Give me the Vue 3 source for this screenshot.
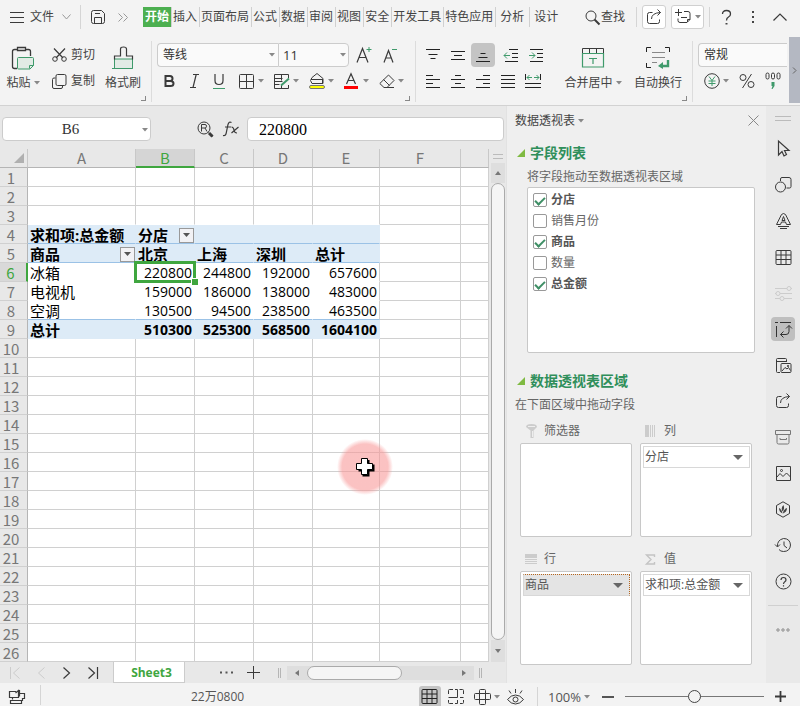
<script setup>
import { h, ref } from 'vue'

const G = '#3f9a6b'
const icons = {
  menu: [14, 12, '<path d="M0 1.5h14M0 6.5h14M0 11.5h14"/>'],
  chevDown: [9, 6, '<path d="M.5 .5l4 4.500 4-4.500" stroke="#999"/>'],
  save: [14, 14, '<path d="M2.500 .5h8l3 3v8q0 2-2 2h-9q-2 0-2-2v-9q0-2 2-2zM3.500 13.500v-6h7v6M4 3.500h5"/>'],
  more: [10, 9, '<path d="M.5 .5l4 4-4 4M5.500 .5l4 4-4 4" stroke="#999"/>'],
  search: [15, 15, '<circle cx="6" cy="6" r="5"/><path d="M9.500 9.500l5 5" stroke-width="2"/>'],
  share: [16, 16, '<path d="M6.500 3.500h-3q-2 0-2 2v7q0 2 2 2h8q2 0 2-2v-2M5.500 10q0-6 9-6.500M11.500 .5l3 3-3 3"/>'],
  dup: [16, 16, '<path d="M3.500 0v7M0 3.500h7M9 2.500h4q2 0 2 2v6l-3 3h-7q-2 0-2-2v-2M6 8.500h6M12.500 13v-2.500h2.500"/>'],
  help: [11, 15, '<path d="M1.500 4q0-3.500 4-3.500t4 3.500q0 2-2 3t-2 3.500" stroke-width="1.300"/><path d="M4.500 13h2v1.500h-2z" fill="#444" stroke="none"/>'],
  dots: [4, 14, '<path d="M1 1h2v2H1zM1 6h2v2H1zM1 11h2v2H1z" fill="#444" stroke="none"/>'],
  up: [14, 8, '<path d="M.5 7.500l6.500-6.500 6.500 6.500" stroke-width="1.200"/>'],
  caret: [6, 4, '<path d="M0 0h6L3 3.500z" fill="#888" stroke="none"/>'],
  bigCaret: [10, 5, '<path d="M0 0h10L5 5z" fill="#666" stroke="none"/>'],
  paste: [24, 24, `<path d="M6 3.500H3.500q-2 0-2 2v15q0 2 2 2H6M15 3.500h2.500q2 0 2 2V10M6.500 1.500h8v3h-8z" stroke-width="1.300"/><path d="M6.500 12.500q0-1 1-1h14q1 0 1 1v7l-3.500 3.500h-11.500q-1 0-1-1zM18.500 22.500v-3h4" fill="#e2ebe5" stroke="${G}"/>`],
  cut: [15, 14, '<path d="M2 .5l9 9.500M13 .5L4 10" stroke-width="1.200"/><circle cx="3" cy="11" r="2.300"/><circle cx="12" cy="11" r="2.300"/>'],
  copy: [15, 15, '<path d="M5.500 .5h7q1.500 0 1.500 1.500v8q0 1.500-1.500 1.500h-7q-1.500 0-1.500-1.500V2q0-1.500 1.500-1.500zM3.500 4H2Q.5 4 .5 5.500v7.500q0 1.500 1.500 1.500h7q1.500 0 1.500-1.500v-1"/>'],
  painter: [22, 24, `<path d="M2.500 13v9.500h18V13z" fill="#e2ebe5" stroke="${G}"/><path d="M2.500 13.500v-3.500h6V3q0-2 3-2t3 2v7h6v3.500" stroke-width="1.200"/><path d="M0 22.500h20.500" stroke="${G}"/>`],
  fontUp: [17, 18, `<path d="M1 16.500L6.500 2.500 12 16.500M3 11.500h7" stroke-width="1.200"/><path d="M10.500 3.500h5M13 1v5" stroke="${G}"/>`],
  fontDown: [15, 18, `<path d="M1 16.500L5.500 4.500 10 16.500M2.500 12h6" stroke-width="1.200"/><path d="M9 3.500h5" stroke="${G}"/>`],
  bold: [12, 14, '<path d="M2.500 2h4.500q2.500 0 2.500 2.500t-2.500 2.500h-4.500h5q3 0 3 2.500t-3 2.500h-5z" stroke-width="2"/>'],
  italic: [9, 14, '<path d="M3 .5h6M0 13.500h6M6.200 .5L3 13.500" stroke-width="1.200"/>'],
  underline: [12, 15, `<path d="M2 0v6.500q0 4 4 4t4-4V0" stroke-width="1.200"/><path d="M0 14.500h12" stroke="${G}"/>`],
  borders: [15, 15, '<path d="M1.500 .5h12q1 0 1 1v12q0 1-1 1h-12q-1 0-1-1v-12q0-1 1-1zM7.500 .5v14M.5 7.500h14"/>'],
  style: [16, 15, `<path d="M14.500 4V.5H.5v14h14V11M.5 7.500h8M.5 4.500h8M7.500 .5v6M7.500 10v4.500M.5 10.500h5"/><path d="M15 4.500L7 11.500" stroke="${G}" stroke-width="2"/>`],
  fill: [16, 16, '<path d="M3 4.500l5-4 6 5v5h-11l-1.500-3zM2 6.500h12M13.500 6v4"/><rect x=".5" y="12.500" width="15" height="3" rx="1.500" fill="#ff0" stroke="#777"/>'],
  color: [14, 16, '<path d="M2.500 11L7 .8 11.500 11M4 7.500h6" stroke-width="1.200"/><path d="M0 13h14v3H0z" fill="#f00" stroke="none"/>'],
  eraser: [16, 15, '<path d="M9.500 1l5.500 5.500-7 7H5L.8 9.500zM4.500 5.500l6 6M5 13.500h10"/>'],
  vTop: [14, 12, '<path d="M0 .5h14M2.500 5.500h9M4.500 9.500h5" stroke="#222"/>'],
  vMid: [14, 9, '<path d="M0 .5h14M3 4.500h8M0 8.500h14" stroke="#222"/>'],
  vBot: [14, 14, '<path d="M4.500 5.500h5M2.500 9.500h9M0 13.500h14" stroke="#222"/>'],
  outdent: [15, 13, `<path d="M5 .5h9M8 4.500h6M8 8.500h6M1 12.500h13" stroke="#222"/><path d="M0 6.500h6M3 3.500l-3 3 3 3" stroke="${G}"/>`],
  indent: [15, 13, `<path d="M1 .5h13M8 4.500h6M8 8.500h6M1 12.500h13" stroke="#222"/><path d="M0 6.500h6M3 3.500l3 3-3 3" stroke="${G}"/>`],
  hLeft: [14, 13, '<path d="M0 .5h7M0 4.500h14M0 8.500h7M0 12.500h14" stroke="#222"/>'],
  hMid: [14, 13, '<path d="M4 .5h6M0 4.500h14M4 8.500h6M0 12.500h14" stroke="#222"/>'],
  hRight: [14, 13, '<path d="M7 .5h7M0 4.500h14M7 8.500h7M0 12.500h14" stroke="#222"/>'],
  justify: [14, 13, '<path d="M0 .5h14M0 4.500h14M0 8.500h14M0 12.500h14" stroke="#222"/>'],
  spread: [16, 14, `<path d="M.5 0v6M15.500 0v6M0 9.500h16M0 13.500h16" stroke="#222"/><path d="M2 3.500h5M9 3.500h5M4.500 1L2 3.500 4.500 6M11.500 1l2.500 2.500L11.500 6" stroke="${G}"/>`],
  merge: [24, 22, `<path d="M1.500 6.500v-5h21v5M8.500 1.500v5M15.500 1.500v5" /><path d="M1.500 6.500h21v13.500h-21zM8 11.500h8M12 11.500V17" stroke="${G}" stroke-width="1.200"/>`],
  wrap: [24, 22, `<path d="M.5 5V.5H5M19 .5h4.500V5M.5 16v4.500H5" stroke="#222"/><path d="M6 5.500h13M6 10.500h13M6 15.500h5" stroke="#888"/><path d="M22 13v6h-7" stroke="${G}" stroke-width="2.400"/><path d="M12 19l5-4v7z" fill="${G}" stroke="none"/>`],
  yen: [16, 16, `<circle cx="8" cy="8" r="7.300"/><path d="M5 3.500L8 7.500l3-4M8 7.500v5.500M4.500 8h7M4.500 10.500h7" stroke="${G}"/>`],
  percent: [16, 16, '<circle cx="4" cy="4.500" r="3"/><circle cx="12" cy="11.500" r="3"/><path d="M12.500 1l-9 14"/>'],
  thousands: [16, 18, `<rect x="1" y="1" width="3" height="6" rx="1.500"/><rect x="6.500" y="1" width="3" height="6" rx="1.500"/><rect x="12" y="1" width="3" height="6" rx="1.500"/><path d="M6.500 10h3v4l-2 3h-1l1-3h-1z" fill="${G}" stroke="none"/>`],
  right: [5, 7, '<path d="M1 .5l3 3-3 3" stroke="#666"/>'],
  lens: [17, 17, '<circle cx="7" cy="7" r="6"/><path d="M4.500 10.500v-7h3.500q1.500 0 1.500 1.700T8 7H4.500M8 7l2 3.500M11.500 11.500l4 4"/><path d="M12 12l3.500 3.500" stroke-width="3"/>'],
  fx: [17, 16, '<path d="M8.500 1.500q-2.500-1.500-3.500 2L3 13q-.7 2-3 1.500M2 6h6" stroke-width="1.200"/><path d="M8.500 6q2 0 2.500 3t3 3M15.500 6L8.500 12" stroke-width="1.200"/>'],
  close: [11, 11, '<path d="M.5 .5l10 10M10.500 .5l-10 10" stroke="#888"/>'],
  corner: [10, 10, '<path d="M10 0v10H0z" fill="#b0b0b0" stroke="none"/>'],
  tri: [8, 8, '<path d="M8 0v8H0z" fill="#7fba42" stroke="none"/>'],
  funnel: [13, 14, '<path d="M1 3q0-3 5.500-3T12 3L8.500 6.500V14h-3V6.500z" fill="#ccc" stroke="none"/><path d="M3 2.500h7M7.500 7v6" stroke="#eee"/>'],
  cols: [11, 12, '<path d="M0 0h4v12H0zM5 0h1v12H5zM7 0h1v12H7zM9 0h1v12H9z" fill="#ccc" stroke="none"/>'],
  rowsIc: [12, 11, '<path d="M0 0h12v4H0zM0 5h12v1H0zM0 7h12v1H0zM0 9h12v1H0z" fill="#ccc" stroke="none"/>'],
  sigma: [11, 11, '<path d="M9.500 3V1H1.500L6 5.500 1.500 10h8V8" stroke="#c4c4c4" stroke-width="1.400"/>'],
  grip: [16, 5, '<path d="M0 .5h16M0 4.500h16" stroke="#bbb"/>'],
  arrow: [14, 18, '<path d="M2.500 1v14l3.500-3.500 2 4.500 2.500-1.500-2-4h4.500z" stroke-width="1.200"/>'],
  shapes: [17, 16, '<path d="M5.500 4V2q0-1.500 1.500-1.500h7q2 0 2 2v7q0 1.500-1.500 1.500h-3"/><circle cx="5.500" cy="10" r="5"/>'],
  art: [15, 16, '<path d="M.5 11.500L5.500 1.500q2-2 4 0l5 10h-4L9.500 9h-4l-1 2.500zM6 7.500l1.500-4 1.500 4zM2 13.500h11M4 15.500h7"/>'],
  table: [17, 15, '<path d="M2 .5h13q1 0 1 1v12q0 1-1 1H2q-1 0-1-1v-12q0-1 1-1zM1 5h15M1 9.500h15M6 .5V14.500M11 .5V14.500"/>'],
  sliders: [17, 16, '<path d="M0 3.500h12M5 8.500h12M0 8.500h1M0 13.500h5M9 13.500h8M16 3.500h1" stroke="#ccc"/><circle cx="14" cy="3.500" r="2" stroke="#ccc"/><circle cx="3" cy="8.500" r="2" stroke="#ccc"/><circle cx="7" cy="13.500" r="2" stroke="#ccc"/>'],
  pivot: [17, 17, '<path d="M5 1.500h11M1.500 5v11M0 1.500h3M14 4.500v6q0 3-3 3H5.500M11 7.500l3-3 3 3M8.500 10.500l-3 3 3 3" stroke="#333"/>'],
  gallery: [17, 17, '<path d="M5 15.500H2.500q-1 0-1-1v-12q0-1 1-1h8q1 0 1 1V5M1.500 4.500h10M7 6.500h8q1 0 1 1v7q0 1-1 1H7q-1 0-1-1v-7q0-1 1-1zM7 14l3-3.500 2 1.500 1.500-1.500 2 3"/><circle cx="13" cy="9" r=".7"/>'],
  archive: [17, 15, '<path d="M.5 .5h15v4H.5zM2 4.500v8q0 1.500 1.500 1.500h9q1.500 0 1.500-1.500v-8M5 8v1.500h6.500V8" stroke="#777"/>'],
  image: [17, 17, '<path d="M1.500 1.500h14v14h-14zM2 12l3-3.500 3 3 3.500-3.500 4 4"/><circle cx="6.500" cy="5.500" r="1"/>'],
  leaf: [16, 17, '<path d="M8 .8l6.500 3.700v8L8 16.200 1.500 12.500v-8z"/><path d="M8.500 4q-3 3-1 6.500Q10 8 8.500 4zM4 7q0 4 3.500 5.500Q7 8.500 4 7zM12 7q0 4-4 5.500 0-4 4-5.500z" fill="#444" stroke="none"/>'],
  history: [17, 16, '<path d="M2.500 9.500Q2 3 8.500 1.500q6.500 0 7 6.500-.5 6.500-7 6.500-3 0-4.500-2M9 4.500V8.500l3 2.500M0 7.500l2.500 2.500 2.500-2.500"/>'],
  circleHelp: [17, 17, '<circle cx="8.500" cy="8.500" r="7.500"/><path d="M6 7q0-2.500 2.500-2.500T11 7q0 1-1.200 1.700T8.500 11M8.500 12.200v1.300" stroke-width="1.200"/>'],
  ellipsis: [14, 4, '<circle cx="2" cy="2" r="1.200" stroke="#888"/><circle cx="7" cy="2" r="1.200" stroke="#888"/><circle cx="12" cy="2" r="1.200" stroke="#888"/>'],
  first: [10, 12, '<path d="M.5 0v12M9.500 .5L3.500 6l6 5.500" stroke="#ccc"/>'],
  prev: [7, 12, '<path d="M6.500 .5L.5 6l6 5.500" stroke="#ccc"/>'],
  next: [7, 12, '<path d="M.5 .5L6.500 6l-6 5.500" stroke-width="1.200"/>'],
  last: [10, 12, '<path d="M9.500 0v12M.5 .5L6.500 6l-6 5.500" stroke-width="1.200"/>'],
  sheetMore: [14, 3, '<path d="M0 .5h2v2H0zM5.500 .5h2v2h-2zM11 .5h2v2h-2z" fill="#555" stroke="none"/>'],
  plus: [13, 13, '<path d="M6.500 0v13M0 6.500h13"/>'],
  vgrip: [3, 10, '<path d="M.5 0v10M2.500 0v10" stroke="#b5b5b5"/>'],
  sUp: [6, 4, '<path d="M0 4h6L3 0z" fill="#777" stroke="none"/>'],
  sDown: [6, 4, '<path d="M0 0h6L3 4z" fill="#777" stroke="none"/>'],
  sLeft: [4, 6, '<path d="M4 0v6L0 3z" fill="#777" stroke="none"/>'],
  sRight: [4, 6, '<path d="M0 0v6l4-3z" fill="#777" stroke="none"/>'],
  dock: [17, 16, '<path d="M7 2.500H.5v6H9.500V1.500l-3 2.500M9.500 1.500h1v6M3.500 8.500v2M1.500 14.500v-3H12.500v3zM11 4.500h4.500v5h-2V12" stroke-width="1.200"/>'],
  grid: [17, 15, '<path d="M2 .5h13q1 0 1 1v12q0 1-1 1H2q-1 0-1-1v-12q0-1 1-1zM1 5h15M1 9.500h15M6 .5V14.500M11 .5V14.500" stroke="#222"/>'],
  page: [17, 15, '<path d="M.5 5V1.500q0-1 1-1H5M7 .5h2.500V8.500H.5M11.500 .5h3q1 0 1 1V5M15.500 8.500H12M.5 11v2.500q0 1 1 1H5M7 14.500h2.500V11M12 14.500h2.500q1 0 1-1V11"/>'],
  read: [17, 16, '<path d="M6.500 .5h4q1 0 1 1v13q0 1-1 1h-4q-1 0-1-1v-13q0-1 1-1zM5.500 4.500h-4q-1 0-1 1v4q0 1 1 1h4M11.500 4.500h4q1 0 1 1v4q0 1-1 1h-4M5.500 4.500h6M5.500 10.500h6"/>'],
  eye: [17, 16, '<path d="M.5 10.500q3.500-4.500 8-4.500t8 4.500q-3.500 4.500-8 4.500t-8-4.500zM8.500 0v4M2 1.500l2 3M15 1.500l-2 3"/><circle cx="8.500" cy="10.500" r="2.500"/>'],
  minus: [12, 2, '<path d="M0 1h12" stroke-width="2" stroke="#555"/>'],
  zoomPlus: [11, 11, '<path d="M0 5.500h11M5.500 0v11" stroke-width="1.800"/>'],
  filterArrow: [7, 5, '<path d="M0 0h7L3.500 4z" fill="#555" stroke="none"/>'],
  cell: [20, 20, '<path d="M7.500 3h7v4.500h5v7h-5v5h-7v-5h-4v-7h4z" fill="#000" stroke="none"/><path d="M6.500 1.500h6v5h5v6h-5v5h-6v-5h-5v-6h5z" fill="#fff" stroke="#000"/>'],
}
const Icon = ({ name }) => {
  const [w, ht, body] = icons[name]
  return h('svg', {
    width: w, height: ht, viewBox: `0 0 ${w} ${ht}`, fill: 'none', stroke: '#3a3a3a',
    'stroke-width': 1, 'aria-hidden': 'true', innerHTML: body,
  })
}
Icon.props = ['name']

const tabs = ['开始', '插入', '页面布局', '公式', '数据', '审阅', '视图', '安全', '开发工具', '特色应用', '分析', '设计']
const activeTab = ref('开始')
const columns = ['A', 'B', 'C', 'D', 'E', 'F', '']
const pivot = {
  4: ['求和项:总金额', '分店', '', '', ''],
  5: ['商品', '北京', '上海', '深圳', '总计'],
  6: ['冰箱', 220800, 244800, 192000, 657600],
  7: ['电视机', 159000, 186000, 138000, 483000],
  8: ['空调', 130500, 94500, 238500, 463500],
  9: ['总计', 510300, 525300, 568500, 1604100],
}
const value = (r, c) => pivot[r]?.[c] ?? ''
const cellClass = (r, c) => {
  const inside = c < 5
  return {
    num: typeof value(r, c) === 'number',
    above: inside && r === 3,
    pivot: inside && r >= 4 && r <= 9,
    shade: inside && (r === 4 || r === 5 || r === 9),
    rule: inside && (r === 4 || r === 5 || r === 8),
    edge: c === 4 && r >= 6 && r <= 8,
    active: r === 6 && c === 1,
  }
}
const fields = ref([
  { name: '分店', on: true },
  { name: '销售月份', on: false },
  { name: '商品', on: true },
  { name: '数量', on: false },
  { name: '总金额', on: true },
])
const areas = [
  { label: '筛选器', icon: 'funnel', item: '' },
  { label: '列', icon: 'cols', item: '分店' },
  { label: '行', icon: 'rowsIc', item: '商品', focus: true },
  { label: '值', icon: 'sigma', item: '求和项:总金额' },
]
const tools = ['arrow', 'shapes', 'art', 'table', 'sliders', 'pivot', 'gallery', 'share', 'archive', 'image', 'leaf', 'history', 'circleHelp']
const zoom = ref(50)
</script>

<template>
  <div class="app">
    <header class="topbar">
      <button class="file"><Icon name="menu" /><span>文件</span><Icon name="chevDown" class="file-chev" /></button>
      <i class="vsep tall"></i>
      <button class="save"><Icon name="save" /></button>
      <button class="more"><Icon name="more" /></button>
      <nav class="tabs">
        <button v-for="t in tabs" :key="t" :class="{ on: t === activeTab, wide: t === '分析' || t === '设计' }" @click="activeTab = t">{{ t }}</button>
      </nav>
      <div class="top-right">
        <button class="find"><Icon name="search" /><span>查找</span></button>
        <i class="vsep"></i>
        <button class="boxed"><Icon name="share" /></button>
        <button class="boxed dup"><Icon name="dup" /><Icon name="caret" /></button>
        <i class="vsep"></i>
        <button class="sq"><Icon name="help" /></button>
        <button class="sq"><Icon name="dots" /></button>
        <button class="sq"><Icon name="up" /></button>
      </div>
    </header>

    <section class="ribbon">
      <div class="group clipboard">
        <button class="big paste"><Icon name="paste" /><span>粘贴 <Icon name="caret" /></span></button>
        <div class="stack small">
          <button class="inline"><Icon name="cut" /><span>剪切</span></button>
          <button class="inline"><Icon name="copy" /><span>复制</span></button>
        </div>
        <button class="big"><Icon name="painter" /><span>格式刷</span></button>
        <i class="corner"></i>
      </div>

      <div class="group font">
        <div class="stack">
          <div class="line">
            <label class="combo family"><select aria-label="字体"><option>等线</option></select><Icon name="caret" /></label>
            <label class="combo size"><select aria-label="字号"><option>11</option></select><Icon name="caret" /></label>
            <button class="grow"><Icon name="fontUp" /></button>
            <button class="grow"><Icon name="fontDown" /></button>
          </div>
          <div class="line">
            <button class="tool"><Icon name="bold" /></button>
            <button class="tool"><Icon name="italic" /></button>
            <button class="tool"><Icon name="underline" /></button>
            <div class="splits">
              <button v-for="n in ['borders', 'style', 'fill', 'color', 'eraser']" :key="n" class="split"><Icon :name="n" /><Icon name="caret" /></button>
            </div>
          </div>
        </div>
        <i class="corner"></i>
      </div>

      <div class="group align">
        <div class="stack">
          <div class="line">
            <button class="tool"><Icon name="vTop" /></button>
            <button class="tool"><Icon name="vMid" /></button>
            <button class="tool pressed"><Icon name="vBot" /></button>
            <button class="tool spaced"><Icon name="outdent" /></button>
            <button class="tool"><Icon name="indent" /></button>
          </div>
          <div class="line">
            <button v-for="n in ['hLeft', 'hMid', 'hRight', 'justify', 'spread']" :key="n" class="tool"><Icon :name="n" /></button>
          </div>
        </div>
        <button class="big merge"><Icon name="merge" /><span>合并居中 <Icon name="caret" /></span></button>
        <button class="big wrap"><Icon name="wrap" /><span>自动换行</span></button>
        <i class="corner"></i>
      </div>

      <div class="group number">
        <div class="stack">
          <div class="line">
            <label class="combo format"><select aria-label="数字格式"><option>常规</option></select></label>
          </div>
          <div class="line numbers">
            <button class="split"><Icon name="yen" /><Icon name="caret" /></button>
            <button><Icon name="percent" /></button>
            <button><Icon name="thousands" /></button>
          </div>
        </div>
      </div>
      <button class="ribbon-next"><Icon name="right" /></button>
    </section>

    <main class="work">
      <section class="book">
        <div class="formula">
          <label class="name-box"><input value="B6" aria-label="名称框" /><Icon name="caret" /></label>
          <button class="lens"><Icon name="lens" /></button>
          <button class="fx"><Icon name="fx" /></button>
          <input class="entry" value="220800" aria-label="编辑栏" />
        </div>

        <div class="sheet">
          <div class="grid-area">
            <table>
              <colgroup>
                <col class="w-head" /><col class="w-a" /><col class="w-b" /><col class="w-b" /><col class="w-b" /><col class="w-e" /><col class="w-f" /><col />
              </colgroup>
              <thead>
                <tr>
                  <th class="origin"><Icon name="corner" /></th>
                  <th v-for="(c, i) in columns" :key="i" :class="{ sel: c === 'B' }">{{ c }}</th>
                </tr>
              </thead>
              <tbody>
                <tr v-for="r in 26" :key="r">
                  <th :class="{ sel: r === 6 }">{{ r }}</th>
                  <td v-for="(c, i) in columns" :key="i" :class="cellClass(r, i)">{{ value(r, i) }}<button v-if="(r === 4 && i === 1) || (r === 5 && i === 0)" class="filter" aria-label="筛选"><Icon name="filterArrow" /></button><span v-if="r === 6 && i === 1" class="cursor-box"></span></td>
                </tr>
              </tbody>
            </table>
            <div class="pointer"><Icon name="cell" /></div>
          </div>
          <div class="vscroll">
            <span class="vhandle"><Icon name="grip" /></span>
            <button><Icon name="sUp" /></button>
            <div class="vtrack"></div>
            <button class="down"><Icon name="sDown" /></button>
          </div>
        </div>

        <div class="sheetbar">
          <div class="nav">
            <button><Icon name="first" /></button>
            <button><Icon name="prev" /></button>
            <button><Icon name="next" /></button>
            <button><Icon name="last" /></button>
          </div>
          <button class="sheet-tab">Sheet3</button>
          <button class="sheet-more"><Icon name="sheetMore" /></button>
          <button class="sheet-add"><Icon name="plus" /></button>
          <Icon name="vgrip" />
          <div class="hscroll">
            <button><Icon name="sLeft" /></button>
            <div class="hthumb"></div>
            <button class="hend"><Icon name="sRight" /></button>
          </div>
          <Icon name="vgrip" />
        </div>
      </section>

      <aside class="panel">
        <div class="panel-title"><button>数据透视表 <Icon name="caret" /></button><button class="close" aria-label="关闭"><Icon name="close" /></button></div>
        <h2><Icon name="tri" />字段列表</h2>
        <p class="hint inset">将字段拖动至数据透视表区域</p>
        <ul class="fields">
          <li v-for="f in fields" :key="f.name">
            <label :class="{ on: f.on }"><input v-model="f.on" type="checkbox" />{{ f.name }}</label>
          </li>
        </ul>
        <h2 class="second"><Icon name="tri" />数据透视表区域</h2>
        <p class="hint">在下面区域中拖动字段</p>
        <div class="areas">
          <div v-for="a in areas" :key="a.label">
            <h3><span><Icon :name="a.icon" /></span>{{ a.label }}</h3>
            <div class="drop">
              <button v-if="a.item" :class="['chip', { focus: a.focus }]">{{ a.item }}<Icon name="bigCaret" /></button>
            </div>
          </div>
        </div>
      </aside>

      <aside class="side">
        <span class="side-grip"><Icon name="grip" /></span>
        <button v-for="t in tools" :key="t" :class="{ on: t === 'pivot' }"><Icon :name="t" /></button>
        <hr />
        <button><Icon name="ellipsis" /></button>
      </aside>
    </main>

    <footer class="status">
      <button class="dock"><Icon name="dock" /></button>
      <i class="vsep"></i>
      <span class="reading">22万0800</span>
      <div class="views">
        <button class="view on"><Icon name="grid" /></button>
        <button class="view"><Icon name="page" /></button>
        <button class="view read"><Icon name="read" /><Icon name="caret" /></button>
        <button class="view eye"><Icon name="eye" /></button>
        <i class="vsep"></i>
        <button class="pct">100% <Icon name="caret" /></button>
        <button class="step"><Icon name="minus" /></button>
        <input v-model="zoom" type="range" min="0" max="100" aria-label="缩放" />
        <button class="step"><Icon name="zoomPlus" /></button>
      </div>
    </footer>
  </div>
</template>

<style>
body { margin: 0; }
</style>

<style scoped>
.app {
  min-height: 100vh;
  display: flex;
  flex-direction: column;
  background: #f3f3f3;
  color: #444;
  font: 12px/16px "Open Sans", "Noto Sans CJK SC", sans-serif;
  overflow: hidden;
}
.app * { box-sizing: border-box; }
button {
  border: 0;
  padding: 0;
  margin: 0;
  background: none;
  color: inherit;
  font: inherit;
  white-space: nowrap;
  display: flex;
  align-items: center;
  justify-content: center;
  flex: none;
}
svg { display: block; flex: none; overflow: visible; }
.vsep { width: 1px; height: 20px; background: #d5d5d5; flex: none; }
.vsep.tall { height: 24px; }

.topbar { height: 34px; display: flex; align-items: center; padding: 0 9px 0 10px; }
.file { gap: 6px; margin-right: 9px; }
.file-chev { margin-left: 2px; }
.save { margin-left: 10px; }
.more { margin: 0 15px 0 13px; }
.tabs { display: flex; }
.tabs button { height: 20px; padding: 0 2px 0 1px; border-left: 1px solid #d0d0d0; }
.tabs button.wide { padding: 0 5px 0 4px; }
.tabs button.on { background: #4caf50; color: #fff; font-weight: bold; border-color: #4caf50; }
.top-right { margin-left: auto; display: flex; align-items: center; gap: 5px; }
.find { gap: 1px; margin-right: 6px; }
.boxed { width: 24px; height: 24px; border: 1px solid #d0d0d0; border-radius: 3px; background: #fff; }
.boxed.dup { width: 33px; gap: 4px; }
.sq { width: 22px; height: 24px; }

.ribbon { height: 72px; display: flex; border-bottom: 1px solid #d2d2d2; }
.group { position: relative; display: flex; margin: 7px 0 3px; padding: 0 10px 0 5px; border-right: 1px solid #dcdcdc; }
.clipboard { padding-left: 3px; padding-right: 10px; }
.group.font { padding-right: 8px; }
.group.number { flex: 1; border: 0; padding-right: 0; margin-right: 2px; min-width: 0; overflow: hidden; }
.corner { position: absolute; right: 5px; bottom: 1px; width: 5px; height: 5px; border: solid #888; border-width: 0 1px 1px 0; }
.big { flex-direction: column; justify-content: flex-start; padding-top: 5px; gap: 5px; width: 36px; }
.big span { display: flex; align-items: center; gap: 3px; }
.big.paste { width: 40px; }
.big.merge { width: 60px; margin-left: 15px; }
.big.wrap { width: 48px; margin-left: 11px; }
.big.merge > svg, .big.wrap > svg { margin: 1px 0; }
.stack { display: flex; flex-direction: column; padding-top: 1px; min-width: 0; }
.stack.small { margin: 0 10px 0 9px; }
.inline { height: 26px; gap: 4px; }
.line { display: flex; align-items: center; height: 26px; gap: 1px; }
.align .stack { width: 127px; }
.tool { width: 24px; height: 24px; border-radius: 4px; }
.tool.pressed { background: #c4c4c4; }
.tool.spaced { margin-left: 3px; }
.combo { position: relative; display: block; height: 24px; }
.combo svg { position: absolute; right: 3px; top: 10px; }
.combo select {
  appearance: none; display: block; width: 100%; height: 24px; padding: 0 5px;
  border: 1px solid #ccc; background: #fafafa; color: #333; font: inherit; outline: 0;
}
.family { width: 121px; }
.family select { border-radius: 4px 0 0 4px; border-right: 0; }
.size { width: 71px; margin-right: 6px; margin-left: -1px; }
.size select { border-radius: 0 4px 4px 0; font-size: 13px; padding: 0 4px; }
.grow { margin-right: 9px; }
.splits { display: flex; gap: 10px; margin-left: 7px; }
.split { width: 25px; justify-content: space-between; }
.format { width: 100%; }
.format select { border-right: 0; border-radius: 4px 0 0 4px; }
.number .stack { flex: 1; }
.numbers { padding-left: 6px; gap: 10px; }
.ribbon-next { width: 11px; margin: 3px 0 2px; background: #b4b8c2; }

.work { flex: 1; display: flex; }
.book { flex: 1; min-width: 0; display: flex; flex-direction: column; background: #e8e8e8; }
.formula { display: flex; align-items: center; height: 43px; padding: 3px 2px 0; }
.formula input { border: 1px solid #ccc; border-radius: 4px; background: #fff; height: 24px; outline: 0; color: #333; font: 16px/20px "Liberation Serif", serif; }
.name-box { position: relative; width: 149px; flex: none; }
.name-box input { display: block; width: 100%; text-align: center; padding: 1px 16px 0 4px; font-size: 15px; }
.name-box svg { position: absolute; right: 3px; top: 11px; }
.lens { margin-left: 46px; }
.fx { margin: 0 7px 0 9px; }
.formula .entry { flex: 1; min-width: 0; padding: 1px 11px 0; color: #000; }

.sheet { display: flex; flex: 1; }
.grid-area { position: relative; flex: 1; min-width: 0; background: #fff; }
table { width: 100%; table-layout: fixed; border-collapse: separate; border-spacing: 0; font-size: 15px; line-height: 18px; color: #000; }
.w-head { width: 28px; }
.w-a { width: 108px; }
.w-b { width: 59px; }
.w-e { width: 67px; }
.w-f { width: 81px; }
th, td { height: 19px; padding: 0 2px; border: solid #d0d0d0; border-width: 0 1px 1px 0; white-space: nowrap; }
th { background: #e8e8e8; color: #777; font-weight: normal; font-family: "Noto Sans CJK SC", sans-serif; text-align: center; }
thead th { border-color: #c8c8c8; border-bottom-color: #b5b5b5; }
tbody th { padding: 2px 5px 0 0; border-right-color: #b5b5b5; line-height: 16px; }
thead .sel { background: #d5d5d5; color: #3fa63f; border-bottom: 2px solid #3fa63f; line-height: 17px; }
tbody .sel { background: #d9d9d9; color: #3fa63f; border-right: 2px solid #3fa63f; }
.origin svg { margin: 0 1px 0 auto; }
td { position: relative; padding-top: 2px; line-height: 16px; }
.above { border-bottom-color: #fff; }
.pivot { border-color: #fff; }
.shade { background: #ddebf7; border-color: #ddebf7; font-weight: bold; }
.rule { border-bottom-color: #9bc2e6; }
.edge { border-right-color: #d0d0d0; }
.active { z-index: 1; }
.num { text-align: right; font-size: 14px; }
.filter { position: absolute; right: 0; bottom: 0; width: 15px; height: 15px; border: 1px solid #999; background: #f2f2f5; }
.cursor-box { position: absolute; left: -2px; top: -2px; right: -2px; bottom: -2px; border: 3px solid #3fa63f; }
.cursor-box::after { content: ""; position: absolute; right: -5px; bottom: -5px; width: 6px; height: 6px; background: #3fa63f; border: solid #fff; border-width: 1px 0 0 1px; }
.pointer {
  position: absolute; left: 337px; top: 290px; width: 56px; height: 56px;
  display: flex; align-items: center; justify-content: center; border-radius: 50%;
  background: radial-gradient(closest-side, rgba(248, 150, 150, .58) 82%, rgba(248, 150, 150, 0) 100%);
}
.vscroll { width: 17px; display: flex; flex-direction: column; align-items: center; padding: 0 1px 0 2px; background: #e8e8e8; }
.vhandle { height: 14px; padding-top: 5px; width: 10px; overflow: hidden; }
.vscroll button { width: 14px; height: 20px; background: #dedede; }
.vscroll .down { height: 22px; }
.vtrack { flex: 1; width: 14px; background: #f5f5f5; border: 1px solid #aaa; border-radius: 7px; }

.sheetbar { height: 21px; display: flex; align-items: center; }
.nav { display: flex; width: 113px; padding-left: 10px; gap: 18px; }
.sheet-tab { width: 72px; height: 21px; background: #fff; border: solid #ccc; border-width: 0 1px 1px; color: #3fa63f; font-weight: bold; margin-right: 35px; padding: 1px 0 0 5px; }
.sheet-more { margin-right: 13px; }
.sheet-add { margin-right: 18px; }
.hscroll { flex: 1; display: flex; align-items: center; height: 14px; margin: 0 5px 0 6px; background: #dedede; }
.hscroll button { width: 20px; height: 14px; }
.hthumb { width: 51%; height: 14px; border: 1px solid #aaa; border-radius: 7px; background: #f5f5f5; }
.hscroll .hend { margin-left: auto; }
.sheetbar > svg:last-child { margin-right: 24px; }

.panel { width: 260px; flex: none; background: #efefef; border-left: 1px solid #e2e2e2; }
.panel-title { height: 29px; display: flex; align-items: center; justify-content: space-between; padding: 0 7px 0 8px; color: #444; }
.panel-title button { gap: 3px; }
h2 { display: flex; align-items: center; gap: 5px; margin: 8px 0 0; padding-left: 10px; height: 20px; color: #2f8f5b; font-size: 14px; line-height: 20px; }
h2.second { margin-top: 18px; }
.hint { margin: 4px 0 0; padding-left: 8px; line-height: 20px; color: #666; }
.hint.inset { padding-left: 20px; }
.fields { list-style: none; margin: 0 11px 0 20px; padding: 1px 5px; height: 166px; background: #fff; border: 1px solid #c8c8c8; border-radius: 2px; }
.fields label { display: flex; align-items: center; gap: 4px; height: 21px; color: #666; }
.fields label.on { font-weight: bold; color: #555; }
.fields input { appearance: none; width: 14px; height: 14px; margin: 0; border: 1px solid #999; border-radius: 2px; background: #fff; display: flex; justify-content: center; }
.fields input:checked::after { content: ""; width: 4px; height: 8px; margin-top: 1px; border: solid #3f8f66; border-width: 0 2px 2px 0; transform: rotate(45deg); }
.areas { display: grid; grid-template-columns: 1fr 1fr; gap: 12px 8px; padding: 6px 14px 18px 13px; }
h3 { display: flex; align-items: center; height: 20px; margin: 0 0 2px; padding-left: 5px; font-size: 12px; font-weight: normal; color: #666; }
h3 span { width: 19px; }
.drop { height: 94px; padding: 2px 1px 2px 2px; background: #fff; border: 1px solid #c8c8c8; border-radius: 2px; }
.chip { width: 100%; height: 22px; justify-content: space-between; padding: 0 6px 0 1px; border: 1px solid #d8d8d8; color: #555; }
.chip.focus { background: #e4e4e4; border-top: 1px dotted #b5651d; border-right: 1px dotted #b5651d; }

.side { width: 34px; flex: none; background: #e9e9e9; display: flex; flex-direction: column; align-items: center; gap: 12px; padding-top: 10px; }
.side-grip { height: 9px; }
.side button { width: 24px; height: 24px; border-radius: 4px; }
.side button.on { background: #bfbfbf; }
.side hr { width: 30px; height: 1px; margin: 0; border: 0; background: #d0d0d0; }

.status { height: 23px; display: flex; align-items: center; padding: 0 14px 0 9px; }
.dock { margin-right: 14px; padding-top: 4px; }
.reading { margin-left: 150px; padding-top: 5px; color: #555; }
.views { margin-left: auto; display: flex; align-items: center; height: 23px; padding-top: 4px; }
.view { width: 22px; height: 22px; margin-right: 5px; border-radius: 3px 3px 0 0; }
.view.on { background: #c4c4c4; }
.view.read { width: 29px; gap: 3px; margin-right: 3px; }
.view.eye { margin-right: 10px; }
.pct { gap: 3px; margin: 0 12px 0 10px; font-size: 13px; color: #555; }
.status input { appearance: none; width: 139px; height: 16px; margin: 0 11px; background: linear-gradient(#777, #777) center / 100% 1px no-repeat; outline: 0; }
.status input::-webkit-slider-thumb { appearance: none; width: 13px; height: 13px; border: 1px solid #444; border-radius: 50%; background: #f3f3f3; }
</style>
